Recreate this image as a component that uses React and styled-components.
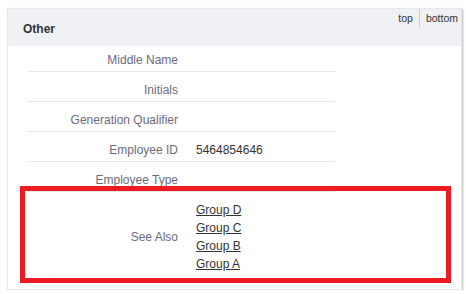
import React from "react";
import styled, { createGlobalStyle } from "styled-components";

const Global = createGlobalStyle`
  html, body { margin: 0; padding: 0; background: #fff; }
  body { font-family: "Liberation Sans", Arial, sans-serif; color: #333; }
`;

const Page = styled.div`
  padding: 8px 0 0 7px;
`;

const Panel = styled.section`
  position: relative;
  width: 453px;
  height: 280px;
  border: 1px solid #e6e7ea;
  background: #fff;
  box-shadow: 1px 1px 2px rgba(0, 0, 0, 0.28);
`;

const Header = styled.header`
  display: flex;
  justify-content: space-between;
  align-items: flex-start;
  height: 37px;
  background: #f0f1f4;
`;

const Title = styled.h2`
  margin: 0;
  padding: 13px 0 0 15px;
  font-size: 12px;
  line-height: 14px;
  font-weight: bold;
  color: #333;
`;

const Nav = styled.nav`
  display: flex;
  padding-right: 3px;
`;

const NavLink = styled.a`
  display: block;
  font-size: 10.5px;
  line-height: 12px;
  padding: 3px 6px 4px;
  color: #333;
  text-decoration: none;
  border-left: ${(p) => (p.$divider ? "1px solid #c9ccd5" : "none")};
  &:last-child { padding-right: 0; }
`;

const Table = styled.div`
  margin-left: 20px;
  width: 307px;
`;

const Row = styled.div`
  display: flex;
  align-items: ${(p) => (p.$center ? "center" : "flex-end")};
  min-height: 30px;
  padding: ${(p) => (p.$center ? "9px 0 7px" : "0 0 4px")};
  box-sizing: border-box;
  border-bottom: ${(p) => (p.$last ? "none" : "1px solid #e8e8e8")};
  &:first-child { min-height: 26px; }
  font-size: 12px;
  line-height: 14px;
`;

const Label = styled.div`
  width: 160px;
  flex: none;
  box-sizing: border-box;
  padding-right: 10px;
  text-align: right;
  color: #6c6b79;
`;

const Value = styled.div`
  padding-left: 8px;
  color: #333;
  display: flex;
  flex-direction: column;
`;

const GroupLink = styled.a`
  color: #333;
  text-decoration: underline;
  line-height: 18px;
`;

const Highlight = styled.div`
  position: absolute;
  left: 12px;
  top: 177px;
  width: 421px;
  height: 87px;
  border: 5px solid #ed1c24;
  pointer-events: none;
`;

const rows = [
  ["Middle Name", ""],
  ["Initials", ""],
  ["Generation Qualifier", ""],
  ["Employee ID", "5464854646"],
  ["Employee Type", ""],
];

export default function App() {
  return (
    <>
      <Global />
      <Page>
        <Panel>
          <Header>
            <Title>Other</Title>
            <Nav>
              <NavLink href="#">top</NavLink>
              <NavLink href="#" $divider>bottom</NavLink>
            </Nav>
          </Header>
          <Table>
            {rows.map(([l, v]) => (
              <Row key={l}>
                <Label>{l}</Label>
                <Value>{v}</Value>
              </Row>
            ))}
            <Row $center $last>
              <Label>See Also</Label>
              <Value>
                <GroupLink href="#">Group D</GroupLink>
                <GroupLink href="#">Group C</GroupLink>
                <GroupLink href="#">Group B</GroupLink>
                <GroupLink href="#">Group A</GroupLink>
              </Value>
            </Row>
          </Table>
          <Highlight />
        </Panel>
      </Page>
    </>
  );
}
